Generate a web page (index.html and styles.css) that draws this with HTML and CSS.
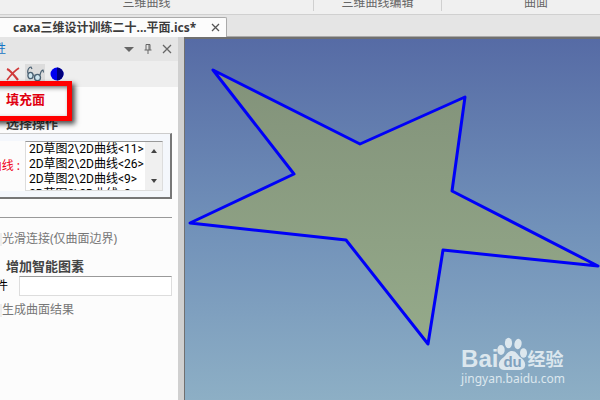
FILE: index.html
```html
<!DOCTYPE html>
<html lang="zh-CN">
<head>
<meta charset="utf-8">
<title>CAXA 填充面</title>
<link rel="stylesheet" href="styles.css">
</head>
<body>
<div class="app">
  <header class="ribbon">
    <span class="ribbon-group ribbon-group-curve">三维曲线</span>
    <span class="ribbon-group">三维曲线编辑</span>
    <span class="ribbon-group ribbon-group-surface">曲面</span>
  </header>
  <nav class="tabs">
    <div class="tab">
      <a class="tab-link" href="#scene">caxa三维设计训练二十...平面.ics*</a>
      <button class="icon-button" type="button" aria-label="关闭文件">
        <svg width="9" height="9" viewBox="0 0 9 9"><path d="M1 1l7 7M8 1L1 8" stroke="#555" stroke-width="1.3"/></svg>
      </button>
    </div>
  </nav>
  <main class="workspace">
    <aside class="panel">
      <div class="panel-title">
        <span class="panel-name">属性</span>
        <button class="icon-button" type="button" aria-label="菜单">
          <svg width="10" height="10" viewBox="0 0 10 10"><path d="M0 3h10L5 8z" fill="#666"/></svg>
        </button>
        <button class="icon-button" type="button" aria-label="固定">
          <svg width="8" height="10" viewBox="0 0 8 10"><path d="M2 6V.5h4V6M5 1v5M.5 6h7M4 6v4" fill="none" stroke="#666"/></svg>
        </button>
        <button class="icon-button" type="button" aria-label="关闭">
          <svg width="10" height="10" viewBox="0 0 10 10"><path d="M1 1l8 8M9 1L1 9" stroke="#666" stroke-width="1.3"/></svg>
        </button>
      </div>
      <div class="toolbar">
        <button class="tool" type="button" aria-label="取消">
          <svg width="14" height="14" viewBox="0 0 14 14"><path d="M1 2c3 1 7 6 11 11" fill="none" stroke="#d03a3a" stroke-width="2.2"/><path d="M13 1C8 4 4 9 1 13" fill="none" stroke="#d03a3a" stroke-width="1.6"/></svg>
        </button>
        <button class="tool tool-active" type="button" aria-label="预览">
          <svg width="18" height="16" viewBox="0 0 18 16"><g fill="#cfe6f0" stroke="#4a6072" stroke-width="1.3"><ellipse cx="4.500" cy="9.500" rx="2.600" ry="3.200"/><ellipse cx="11.500" cy="11.500" rx="3" ry="3.200"/></g><path d="M2 7.500C1 4 3 1 5 1l1 2M7 9.500q1-1 1.500 0M14 9c1-3 1-5 3-5l.5 2.500" fill="none" stroke="#4a6072" stroke-width="1.200"/></svg>
        </button>
        <button class="tool" type="button" aria-label="应用">
          <svg width="14" height="14" viewBox="0 0 14 14"><circle cx="7" cy="7" r="6.500" fill="#0000f0"/><path d="M7 .5a6.500 6.500 0 0 1 0 13z" fill="#00007c"/></svg>
        </button>
      </div>
      <form class="form">
        <h1 class="heading heading-main">填充面</h1>
        <h2 class="heading">选择操作</h2>
        <div class="curve-group">
          <label class="curve-label" for="curves">曲线 :</label>
          <div class="list-box">
            <select class="list" id="curves" multiple size="4">
              <option class="list-item">2D草图2\2D曲线&lt;11&gt;</option>
              <option class="list-item">2D草图2\2D曲线&lt;26&gt;</option>
              <option class="list-item">2D草图2\2D曲线&lt;9&gt;</option>
              <option class="list-item">2D草图2\2D曲线&lt;8&gt;</option>
            </select>
            <div class="scroll">
              <button class="icon-button" type="button" aria-label="向上"><svg width="8" height="6" viewBox="0 0 8 6"><path d="M1 5h6L4 1z" fill="#444"/></svg></button>
              <button class="icon-button" type="button" aria-label="向下"><svg width="8" height="6" viewBox="0 0 8 6"><path d="M1 1h6L4 5z" fill="#444"/></svg></button>
            </div>
          </div>
        </div>
        <hr class="rule">
        <label class="check"><input class="check-box" type="checkbox" disabled>光滑连接(仅曲面边界)</label>
        <h2 class="heading heading-smart">增加智能图素</h2>
        <div class="field">
          <label class="field-label" for="part">零件</label>
          <input class="field-input" id="part" type="text">
        </div>
        <label class="check check-result"><input class="check-box" type="checkbox" disabled>生成曲面结果</label>
      </form>
      <div class="highlight"></div>
    </aside>
    <section class="viewport" id="scene">
      <svg class="star" viewBox="185 39 415 361" preserveAspectRatio="xMinYMin meet" aria-label="填充面">
        <defs><linearGradient id="face" x1="0" y1="0" x2="0" y2="1"><stop offset="0" stop-color="#82927a"/><stop offset="1" stop-color="#95aa8a"/></linearGradient></defs>
        <path d="M213 70L360 144 465 97 452 191 598 266 443 250 428 344 346 240 190 223 294 174z" fill="url(#face)" stroke="#0000f8" stroke-width="3" stroke-linejoin="round"/>
      </svg>
      <div class="watermark">
        <div class="brand">
          <span class="brand-name">Bai</span>
          <span class="paw">
            <svg width="30" height="34" viewBox="0 0 30 34"><g fill="#dce7ee"><ellipse cx="4" cy="13" rx="3.700" ry="5"/><ellipse cx="11.500" cy="6" rx="3.600" ry="5.200"/><ellipse cx="21" cy="7" rx="3.600" ry="5.200" transform="rotate(12 21 7)"/><ellipse cx="26.500" cy="16" rx="3.500" ry="4.800"/><path d="M15 14c4 0 5 3 8 6 3 2 6 5 5 9-1 5-7 4-13 4s-12 1-13-4c-1-4 2-7 5-9 3-3 4-6 8-6z"/></g></svg>
            <span class="paw-text">du</span>
          </span>
          <span class="brand-cn">经验</span>
        </div>
        <div class="site">jingyan.baidu.com</div>
      </div>
    </section>
  </main>
</div>
</body>
</html>
```
FILE: styles.css
```css
* { box-sizing: border-box; }
body {
  margin: 0;
  font: 12px/16px "Noto Sans", "Noto Sans CJK SC", sans-serif;
  color: #000;
  background: #e5e5e5;
}
h1, h2 { margin: 0; font-size: 13px; }
button { padding: 0; border: 0; background: none; }
svg { display: block; }
.app { display: flex; flex-direction: column; height: 100vh; overflow: hidden; }
.ribbon {
  display: grid;
  grid-template-columns: 314px 128px 1fr;
  height: 15px;
  background: #f0f0f0;
  border-bottom: 1px solid #d0d0d0;
  color: #666;
}
.ribbon-group { height: 11px; line-height: 6px; text-align: center; border-right: 1px solid #d0d0d0; }
.ribbon-group-curve { padding-right: 20px; }
.ribbon-group-surface { padding-left: 30px; border: 0; }
.tabs { display: flex; height: 22px; padding-top: 2px; border-bottom: 1px solid #aaa; }
.tab {
  display: flex;
  align-items: center;
  gap: 15px;
  height: 20px;
  padding: 0 6px 0 13px;
  background: #fcfcfc;
  border-top: 1px solid #aaa;
  border-right: 1px solid #aaa;
  border-top-right-radius: 2px;
}
.tab-link { color: #3c3c3c; font-weight: 700; text-decoration: none; white-space: nowrap; }
.workspace { display: flex; flex: 1; min-height: 0; }
.panel { position: relative; width: 184px; flex: none; background: #fcfcfc; border-right: 6px solid #d0d0d0; overflow: hidden; }
.panel-title { display: flex; align-items: center; gap: 10px; height: 24px; padding-right: 6px; background: #e5e5e5; }
.panel-name { flex: 1; margin-left: -18px; color: #1474c4; }
.toolbar { display: flex; align-items: center; gap: 2px; height: 26px; padding-left: 3px; background: #eee; }
.tool { display: grid; place-items: center; width: 20px; height: 20px; }
.tool-active { background: #dcdcdc; }
.form { padding: 3px 6px 0 0; }
.heading { padding-left: 6px; color: #444; line-height: 18px; }
.heading-main { color: #e00010; margin-bottom: 6px; }
.curve-group {
  display: flex;
  align-items: center;
  justify-content: flex-end;
  gap: 5px;
  height: 66px;
  margin-top: 1px;
  padding-right: 7px;
  background: linear-gradient(#fcfcfc, #fcfcfc) 0 50% / calc(100% - 7px) 50px no-repeat #f4f7fc;
  border: 1px solid #777;
  border-width: 1px 2px 2px 0;
  border-top-color: #ccc;
}
.curve-label { flex: none; color: #f00018; }
.list-box { display: flex; flex: none; width: 138px; height: 50px; border: 1px solid #ddd; border-top-color: #999; background: #fff; overflow: hidden; }
.list {
  flex: 1;
  min-width: 0;
  height: 51px;
  margin-top: -3px;
  padding: 0;
  border: 0;
  outline: 0;
  background: #fff;
  color: #000;
  font: 12px/15px Roboto, "Noto Sans CJK SC", sans-serif;
  overflow: hidden;
}
.list-item { height: 15px; min-height: 0; padding: 0 0 0 3px; white-space: nowrap; overflow: visible; }
.scroll { display: flex; flex-direction: column; justify-content: space-between; align-items: center; width: 17px; padding: 6px 0; background: #f0f0f0; }
.rule { margin: 18px 0 12px; border: 0; border-top: 1px solid #999; }
.check { display: flex; align-items: center; height: 18px; color: #777; }
.check-box { flex: none; width: 13px; height: 13px; margin: 0 0 0 -11px; appearance: none; background: #eee; }
.heading-smart { margin-top: 9px; }
.field { display: flex; align-items: center; height: 20px; margin-top: 1px; gap: 11px; }
.field-label { flex: none; margin-left: -16px; }
.field-input { flex: 1; min-width: 0; height: 20px; border: 1px solid #ddd; border-top-color: #999; background: #fff; }
.check-result { margin-top: 5px; }
.highlight { position: absolute; top: 44px; left: -12px; width: 84px; height: 40px; border: 5px solid #f00; box-shadow: 3px 3px 5px rgba(0, 0, 0, .7), inset 2px 2px 4px rgba(0, 0, 0, .5); }
.viewport { position: relative; flex: 1; min-width: 0; border-top: 2px solid #707070; border-left: 1px solid #707070; background: linear-gradient(#566ba5, #7191b9 52%, #8dafc5); }
.star { width: 100%; height: auto; }
.watermark { position: absolute; right: 35px; bottom: 13px; color: #dce7ee; }
.brand { display: flex; align-items: flex-end; }
.brand-name { font: bold 24px/24px "Liberation Sans", sans-serif; }
.brand-cn { font-size: 18px; line-height: 24px; font-weight: 700; }
.paw { position: relative; margin-left: -1px; }
.paw-text { position: absolute; left: 6px; bottom: 1px; font: bold 15px/16px "Liberation Sans", sans-serif; color: #7fa1be; }
.site { font-size: 12px; line-height: 16px; }
```
